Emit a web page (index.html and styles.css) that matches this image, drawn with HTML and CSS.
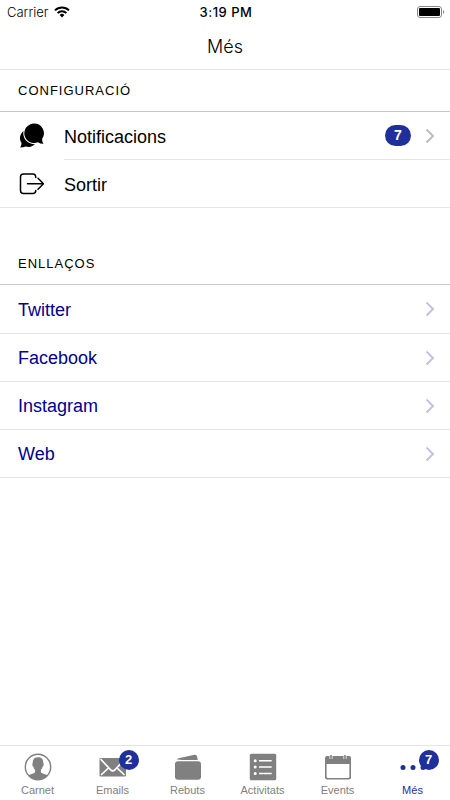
FILE: index.html
```html
<!DOCTYPE html>
<html lang="ca">
<head>
<meta charset="utf-8">
<meta name="viewport" content="width=device-width, initial-scale=1">
<title>Més</title>
<link rel="stylesheet" href="styles.css">
</head>
<body>
<div class="status">
  <div class="carrier">Carrier
    <svg width="16" height="12" viewBox="0 0 16 12" fill="none" stroke="#000" stroke-width="2" aria-hidden="true"><path d="M1 4.400a10 10 0 0 1 14 0M3.600 7.100a6.200 6.200 0 0 1 8.800 0"/><path d="M8 11.400 5.600 9a3.400 3.400 0 0 1 4.800 0z" fill="#000" stroke="none"/></svg>
  </div>
  <time>3:19 PM</time>
  <svg class="battery" width="28" height="12" viewBox="0 0 28 12" aria-hidden="true"><rect x=".5" y=".5" width="24" height="11" rx="2.500" fill="#fff" stroke="#888"/><rect x="2" y="2" width="21" height="8" rx="1"/><path d="M26.200 4v4q1-.6 1-2t-1-2" fill="#777"/></svg>
</div>
<header class="title"><h1>Més</h1></header>
<main>
  <section class="group">
    <h2>Configuració</h2>
    <ul class="list">
      <li><a class="row" href="#notificacions">
        <svg class="row-icon" width="26" height="26" viewBox="0 0 26 26" aria-hidden="true"><path d="M6 8C1.500 10.500 1 16.500 3.500 19.800Q3.600 22.400 2.200 24.600q3.300-.2 5.300-1.200 6 1.800 10-3z"/><path d="M16.200.5a9.800 9.800 0 1 0 3.800 18.800q2.300 1.600 5.500 1.500-1.600-2-1.300-5A9.800 9.800 0 0 0 16.200.5z" stroke="#fff" stroke-width="2" paint-order="stroke"/></svg>
        <span class="row-body"><span class="label">Notificacions</span><span class="pill">7</span>
        <svg class="chevron" width="10" height="16" viewBox="0 0 10 16" aria-hidden="true"><path d="m1.500 1.500 6.500 6.500-6.500 6.500"/></svg></span>
      </a></li>
      <li><a class="row" href="#sortir">
        <svg class="row-icon line" width="26" height="26" viewBox="0 0 26 26" aria-hidden="true"><path d="M17.800 6.500q0-3.500-3-3.500H5.500q-3 0-3 3v13.500q0 3 3 3h9.300q3 0 3-3M9.500 12.800h16M20 7.300l5.500 5.500-5.500 5.500"/></svg>
        <span class="row-body"><span class="label">Sortir</span></span>
      </a></li>
    </ul>
  </section>
  <section class="group links">
    <h2>Enllaços</h2>
    <ul class="list">
      <li><a class="row" href="#twitter"><span class="row-body"><span class="label">Twitter</span><svg class="chevron" width="10" height="16" viewBox="0 0 10 16" aria-hidden="true"><path d="m1.500 1.500 6.500 6.500-6.500 6.500"/></svg></span></a></li>
      <li><a class="row" href="#facebook"><span class="row-body"><span class="label">Facebook</span><svg class="chevron" width="10" height="16" viewBox="0 0 10 16" aria-hidden="true"><path d="m1.500 1.500 6.500 6.500-6.500 6.500"/></svg></span></a></li>
      <li><a class="row" href="#instagram"><span class="row-body"><span class="label">Instagram</span><svg class="chevron" width="10" height="16" viewBox="0 0 10 16" aria-hidden="true"><path d="m1.500 1.500 6.500 6.500-6.500 6.500"/></svg></span></a></li>
      <li><a class="row" href="#web"><span class="row-body"><span class="label">Web</span><svg class="chevron" width="10" height="16" viewBox="0 0 10 16" aria-hidden="true"><path d="m1.500 1.500 6.500 6.500-6.500 6.500"/></svg></span></a></li>
    </ul>
  </section>
</main>
<nav class="tabs">
  <a class="tab" href="#carnet"><span class="tab-icon">
    <svg width="28" height="28" viewBox="0 0 28 28" aria-hidden="true"><circle cx="14" cy="14" r="12.700" fill="none" stroke="currentColor" stroke-width="1.400"/><path d="M14 4.300c3.600 0 5.600 2.300 5.200 5.800 1 .3.500 3.500-.7 3.700-.3 1.600-.9 2.400-1.600 3.200v2c0 1.600 4.600 1.600 6.400 3.500a12.500 12.500 0 0 1-18.600 0c1.800-1.900 6.400-1.900 6.400-3.500v-2c-.7-.8-1.300-1.600-1.600-3.200-1.200-.2-1.700-3.400-.7-3.700C8.400 6.600 10.400 4.300 14 4.300z" fill="currentColor"/></svg></span>Carnet</a>
  <a class="tab" href="#emails"><span class="tab-icon">
    <svg width="28" height="28" viewBox="0 0 28 28" aria-hidden="true"><rect x=".5" y="5" width="26.500" height="18.500" rx="1" fill="currentColor"/><path d="m2 6.500 9.800 10.500q2 1.800 4 0L25.500 6.500M2.500 21.500l7-6.500M25 21.500 18 15" fill="none" stroke="#fff" stroke-width="1.700" stroke-linecap="round"/></svg><span class="badge">2</span></span>Emails</a>
  <a class="tab" href="#rebuts"><span class="tab-icon">
    <svg width="28" height="28" viewBox="0 0 28 28" fill="currentColor" aria-hidden="true"><path d="M2.500 6.600 4.500 5.200 20.500 1.700q2-.4 2.500 1.500l.8 3.800H8Q5 6.200 2.500 6.600z"/><rect x="1" y="8.200" width="26" height="18.600" rx="3"/></svg></span>Rebuts</a>
  <a class="tab" href="#activitats"><span class="tab-icon">
    <svg width="28" height="28" viewBox="0 0 28 28" aria-hidden="true"><rect x=".8" y=".8" width="26.400" height="26.400" rx="1.500" fill="currentColor"/><path d="M10 7.700h12.700M10 14h12.700M10 20.500h12.700" stroke="#fff" stroke-width="1.600"/><g fill="#fff"><circle cx="6.200" cy="7.700" r="1.500"/><circle cx="6.200" cy="14" r="1.500"/><circle cx="6.200" cy="20.500" r="1.500"/></g></svg></span>Activitats</a>
  <a class="tab" href="#events"><span class="tab-icon">
    <svg width="28" height="28" viewBox="0 0 28 28" aria-hidden="true"><path d="M3 3h22q2 0 2 2v19.500q0 2-2 2H3q-2 0-2-2V5q0-2 2-2zM2.600 11v12.500q0 1.500 1.500 1.500h19.800q1.500 0 1.500-1.500V11z" fill="currentColor" fill-rule="evenodd"/><path d="M7 1v5M21 1v5" stroke="#fff" stroke-width="3"/><path d="M7 2v4M21 2v4" stroke="currentColor" stroke-width="1.600"/></svg></span>Events</a>
  <a class="tab active" href="#mes" aria-current="page"><span class="tab-icon">
    <svg width="28" height="28" viewBox="0 0 28 28" fill="currentColor" aria-hidden="true"><circle cx="4" cy="14.500" r="2.500"/><circle cx="14" cy="14.500" r="2.500"/><circle cx="24" cy="14.500" r="2.500"/></svg><span class="badge">7</span></span>Més</a>
</nav>
</body>
</html>
```
FILE: styles.css
```css
* { box-sizing: border-box; }
body {
  margin: 0;
  min-height: 100vh;
  display: flex;
  flex-direction: column;
  background: #fff;
  color: #000;
  font-family: "Liberation Sans", Arial, sans-serif;
}
a { color: inherit; text-decoration: none; }
svg { display: block; flex: none; }
.status {
  display: grid;
  grid-template-columns: 1fr auto 1fr;
  align-items: center;
  height: 23px;
  padding: 0 5px 0 7px;
  font: 300 13px/16px Inter, sans-serif;
}
.carrier { display: flex; align-items: center; gap: 6px; }
.status time { font-weight: 500; letter-spacing: 0.5px; }
.battery { justify-self: end; }
.title {
  display: flex;
  align-items: center;
  justify-content: center;
  height: 47px;
  padding-top: 2px;
  border-bottom: 1px solid #e4e4e4;
}
.title h1 { margin: 0; font: 300 18px/24px Inter, sans-serif; }
main { flex: 1; }
.group h2 {
  margin: 0;
  padding: 13px 18px 12px;
  border-bottom: 1px solid #c8c8cb;
  font-size: 13px;
  line-height: 16px;
  font-weight: 400;
  letter-spacing: 1px;
  text-transform: uppercase;
}
.group + .group { margin-top: 35px; }
.list { margin: 0; padding: 0; list-style: none; }
.list li:last-child { border-bottom: 1px solid #e4e4e4; }
.row { display: flex; align-items: center; padding-left: 18px; }
.row-icon { margin-right: 20px; }
.row-icon.line {
  fill: none;
  stroke: #000;
  stroke-width: 1.5;
  stroke-linecap: round;
  stroke-linejoin: round;
}
.row-body {
  flex: 1;
  display: flex;
  align-items: center;
  min-height: 48px;
  padding-right: 15px;
  border-bottom: 1px solid #e4e4e4;
  font-size: 18px;
  line-height: 24px;
}
.list li:last-child .row-body { border-bottom: 0; min-height: 47px; }
.label { flex: 1; padding-top: 2px; }
.pill {
  width: 26px;
  margin-right: 14px;
  border-radius: 11px;
  background: #20309a;
  color: #fff;
  font-size: 14px;
  line-height: 21px;
  font-weight: 700;
  text-align: center;
}
.chevron { fill: none; stroke: #bcbcc0; stroke-width: 2; }
.links .row { padding-left: 0; }
.links .row-body { padding-left: 18px; color: #00008b; }
.links .label { padding-top: 1px; }
.links .list li:first-child .row-body { min-height: 49px; }
.links .chevron { stroke: #c0c3e2; }
.tabs {
  display: grid;
  grid-template-columns: repeat(6, 1fr);
  border-top: 1px solid #e4e4e4;
}
.tab {
  display: flex;
  flex-direction: column;
  align-items: center;
  gap: 2px;
  padding: 7px 0 2px;
  color: #808080;
  font-size: 11px;
  line-height: 15px;
}
.tab.active { color: #20309a; }
.tab-icon { position: relative; }
.badge {
  position: absolute;
  top: -3px;
  right: -12px;
  width: 20px;
  border-radius: 10px;
  background: #20309a;
  color: #fff;
  font-size: 13px;
  line-height: 20px;
  font-weight: 700;
  text-align: center;
}
```
